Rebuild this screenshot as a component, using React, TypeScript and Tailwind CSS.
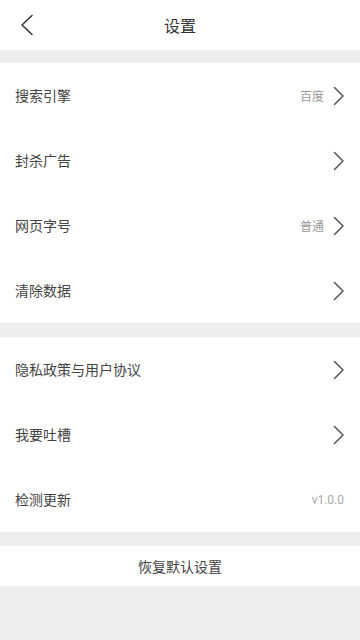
import { ReactNode } from "react";

const FONT = { fontFamily: '"Noto Sans CJK SC", "Noto Sans", sans-serif' };

function Chevron() {
  return (
    <svg width="12" height="20" viewBox="0 0 12 20" fill="none" className="ml-2 shrink-0">
      <path d="M2.5 1.5 L11 10 L2.5 18.5" stroke="#555" strokeWidth="1.5" strokeLinecap="round" strokeLinejoin="round" />
    </svg>
  );
}

function Row({ label, value, arrow = true }: { label: string; value?: ReactNode; arrow?: boolean }) {
  return (
    <div className="flex h-[65px] items-center justify-between pl-[15px] pr-[16px]">
      <span className="text-[14px] text-[#444]">{label}</span>
      <div className="flex items-center">
        {value && <span className="text-[12px] text-[#999]">{value}</span>}
        {arrow && <Chevron />}
      </div>
    </div>
  );
}

export default function App() {
  return (
    <div className="flex min-h-[640px] w-full flex-col bg-[#eeeeee]" style={FONT}>
      <header className="relative flex h-[50px] items-center justify-center bg-white">
        <button type="button" className="absolute left-[20px] top-[14px]">
          <svg width="14" height="22" viewBox="0 0 14 22" fill="none">
            <path d="M12 1.5 L2 11 L12 20.5" stroke="#333" strokeWidth="1.5" strokeLinecap="round" strokeLinejoin="round" />
          </svg>
        </button>
        <h1 className="text-[16px] text-[#333]">设置</h1>
      </header>

      <section className="mt-[13px] bg-white">
        <Row label="搜索引擎" value="百度" />
        <Row label="封杀广告" />
        <Row label="网页字号" value="普通" />
        <Row label="清除数据" />
      </section>

      <section className="mt-[14px] bg-white">
        <Row label="隐私政策与用户协议" />
        <Row label="我要吐槽" />
        <Row label="检测更新" value={<span className="font-['Roboto'] text-[#aaa]">v1.0.0</span>} arrow={false} />
      </section>

      <button type="button" className="mt-[14px] flex h-[40px] items-center justify-center bg-white text-[14px] text-[#444]">
        恢复默认设置
      </button>
    </div>
  );
}
